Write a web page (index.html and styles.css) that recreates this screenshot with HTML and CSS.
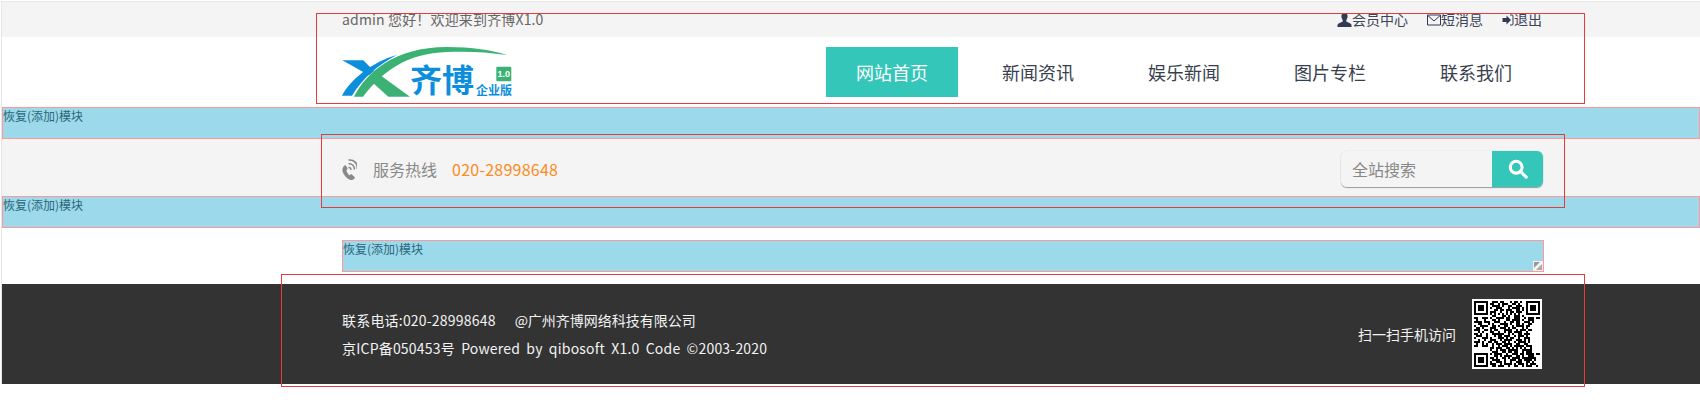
FILE: index.html
```html
<!DOCTYPE html>
<html lang="zh-CN">
<head>
<meta charset="utf-8">
<title>齐博X1.0</title>
<link rel="stylesheet" href="styles.css">
</head>
<body>
<div class="page">
  <div class="topbar">
    <div class="wrap topbar-in">
      <div class="welcome">admin 您好！欢迎来到齐博X1.0</div>
      <div class="user-links">
        <a class="ulink"><svg class="uicon" viewBox="0 0 15 14"><path d="M7.5 0C5.3 0 4.2 1.6 4.4 3.6c.1 1.3.6 2.5 1.3 3.3v1.5C3.800 9.300 1 10.200 .6 11.500L.4 14h14.200l-.2-2.500c-.4-1.300-3.200-2.200-5.100-3.100V6.900c.7-.8 1.200-2 1.300-3.300C10.800 1.600 9.700 0 7.500 0z"/></svg>会员中心</a>
        <a class="ulink"><svg class="uicon mail" viewBox="0 0 14 12"><path d="M.5 1h13v10H.5zM.8 1.500 7 7l6.200-5.500" fill="none" stroke="#333a56"/></svg>短消息</a>
        <a class="ulink"><svg class="uicon out" viewBox="0 0 11 12"><path d="M0 4h4V1.500L8.500 6 4 10.500V8H0z"/><path d="M7.500 1H9.500q1 0 1 1v8q0 1-1 1H7.500" fill="none" stroke="#333a56"/></svg>退出</a>
      </div>
    </div>
  </div>

  <header class="wrap header">
    <svg class="logo" viewBox="0 0 170 50" aria-label="齐博企业版">
      <path class="lb" d="M.3 13.300H21.300L32 24 27 28.300z"/>
      <path class="lb" d="M0 48.700C8 33 30 15 54.700 8 36 18 20 32 10 48.700z"/>
      <path class="lg" d="M12 49.700C24 26 52 0 105 0c25 0 45 3 60 8C145 5 125 4 105 5 65 6 40 25 21 49.700z"/>
      <path class="lg" d="M38 28 68 49.700H46.300L29.700 34.700z"/>
      <text class="lt-big" x="68" y="45">齐博</text>
      <text class="lt-small" x="134" y="48">企业版</text>
      <rect class="lg" x="154.300" y="19.700" width="15" height="14.500" rx="1"/>
      <text class="lt-ver" x="161.800" y="30">1.0</text>
    </svg>
    <nav class="nav">
      <a class="nav-item active">网站首页</a>
      <a class="nav-item">新闻资讯</a>
      <a class="nav-item">娱乐新闻</a>
      <a class="nav-item">图片专栏</a>
      <a class="nav-item">联系我们</a>
    </nav>
  </header>

  <div class="band">恢复(添加)模块</div>

  <div class="hotline">
    <div class="wrap hotline-in">
      <div class="hot-left">
        <svg class="phone" viewBox="0 0 15 22">
          <path d="M2.500 7.500C.8 9-.3 11.500 1 14.500c1.200 3 3.500 6 7 7.300 1.500.5 3.500.2 4.500-1.300.5-.8.200-1.400-.4-1.900l-2.300-2c-.6-.5-1.300-.4-1.800.1l-.7.7C6 16 4.800 14 4.300 12.300l.8-.7c.6-.5.6-1.200.2-1.900L3.900 7.700c-.4-.6-.9-.6-1.400-.2z" fill="#888"/>
          <path d="M6.500 9.500c1.500-.3 2.600 1 2.400 2.500M6.500 5.800c3.500-.6 6.300 2.300 5.700 5.800M6.500 2C12 1.200 16 5.500 15 11" fill="none" stroke="#888" stroke-width="1.500"/>
        </svg>
        <span class="hot-label">服务热线</span>
        <span class="hot-num">020-28998648</span>
      </div>
      <div class="search">
        <div class="search-input">全站搜索</div>
        <div class="search-btn">
          <svg class="search-icon" viewBox="0 0 22 22"><circle cx="9" cy="9" r="6.500" fill="none" stroke="#fff" stroke-width="3.400"/><path d="M13.500 13.500 20 20" stroke="#fff" stroke-width="3.400" stroke-linecap="round"/></svg>
        </div>
      </div>
    </div>
  </div>

  <div class="band">恢复(添加)模块</div>

  <div class="wrap content">
    <div class="band inner">恢复(添加)模块
      <svg class="resize" viewBox="0 0 10 10"><rect width="10" height="10" fill="#eef3f5"/><path d="M1 1h6L1 7z" fill="#999"/><path d="M9 9H3l6-6z" fill="#aaa"/><path d="M2 8 8 2" stroke="#fff"/></svg>
    </div>
  </div>

  <footer class="footer">
    <div class="wrap footer-in">
      <div class="foot-text">
        <div>联系电话:020-28998648<span class="foot-co">@广州齐博网络科技有限公司</span></div>
        <div class="foot-line2">京ICP备050453号 Powered by qibosoft X1.0 Code ©2003-2020</div>
      </div>
      <div class="foot-qr">
        <span>扫一扫手机访问</span>
        <svg class="qr" viewBox="-1 -1 35 35" shape-rendering="crispEdges">
          <rect x="-1" y="-1" width="35" height="35" fill="#fff"/>
          <g fill="none" stroke="#000">
            <rect x=".5" y=".5" width="6" height="6"/>
            <rect x="26.500" y=".5" width="6" height="6"/>
            <rect x=".5" y="26.500" width="6" height="6"/>
            <rect x="24.500" y="24.500" width="4" height="4"/>
            <path d="M9 .5h3m1 0h2m3 0h1m1 0h2m1 0h1
            M8 1.500h2m2 0h1m1 0h3m2 0h2m1 0h1
            M9 2.500h4m1 0h1m2 0h2m2 0h3
            M8 3.500h1m2 0h3m3 0h1m1 0h4m1 0h1
            M10 4.500h2m1 0h2m1 0h3m2 0h2m1 0h1
            M8 5.500h3m2 0h1m2 0h1m1 0h2m1 0h3
            M8 6.500h1m1 0h1m1 0h1m1 0h1m1 0h1m1 0h1m1 0h1m1 0h1
            M9 7.500h2m3 0h2m1 0h1m2 0h3m1 0h1
            M0 8.500h2m2 0h3m1 0h1m2 0h4m1 0h2m2 0h3m2 0h1m1 0h3m1 0h2
            M1 9.500h1m3 0h1m3 0h2m1 0h1m3 0h2m1 0h4m1 0h1m2 0h3
            M0 10.500h4m1 0h3m2 0h3m2 0h1m2 0h2m1 0h2m2 0h3m1 0h1
            M2 11.500h2m3 0h1m1 0h1m3 0h4m1 0h1m2 0h2m1 0h1m2 0h2
            M0 12.500h1m2 0h4m2 0h2m1 0h1m2 0h2m2 0h1m1 0h4m1 0h2
            M1 13.500h2m1 0h1m3 0h3m2 0h3m1 0h1m1 0h2m3 0h1m1 0h1
            M0 14.500h3m2 0h2m1 0h1m1 0h2m3 0h4m2 0h1m1 0h3m1 0h2
            M2 15.500h1m1 0h1m3 0h2m2 0h1m2 0h1m1 0h2m1 0h4m2 0h1
            M0 16.500h2m1 0h1m2 0h1m2 0h6m2 0h1m1 0h1m2 0h2m1 0h3
            M1 17.500h3m2 0h1m3 0h1m1 0h2m1 0h3m2 0h1m1 0h3m1 0h1
            M0 18.500h1m3 0h3m1 0h1m3 0h3m1 0h1m1 0h2m2 0h1m2 0h3
            M2 19.500h1m2 0h1m2 0h3m2 0h1m1 0h4m2 0h3m1 0h1m1 0h1
            M0 20.500h3m1 0h1m2 0h2m1 0h2m2 0h2m1 0h1m2 0h1m1 0h4m1 0h1
            M1 21.500h1m2 0h1m1 0h1m2 0h1m1 0h3m1 0h4m2 0h2m2 0h2
            M0 22.500h2m2 0h3m2 0h1m2 0h1m1 0h3m1 0h1m1 0h5m1 0h3
            M8 23.500h2m1 0h3m2 0h2m1 0h1m1 0h1m1 0h1m1 0h1m2 0h1
            M8 24.500h1m2 0h1m1 0h3m1 0h5
            M9 25.500h3m2 0h2m1 0h2m1 0h2m4 0h3
            M8 26.500h1m1 0h4m2 0h1m2 0h3m1 0h1m3 0h3m1 0h2
            M10 27.500h2m1 0h1m1 0h4m2 0h2m4 0h1m1 0h1
            M8 28.500h2m1 0h1m2 0h2m1 0h1m1 0h4m4 0h1m1 0h2
            M9 29.500h4m2 0h1m2 0h3m1 0h2m1 0h4m1 0h1
            M8 30.500h1m2 0h3m1 0h1m2 0h1m2 0h3m2 0h2m1 0h1
            M8 31.500h3m2 0h1m1 0h4m1 0h1m1 0h3m1 0h1m1 0h3
            M9 32.500h2m1 0h3m2 0h1m2 0h2m2 0h1m1 0h3m2 0h1"/>
          </g>
          <g>
            <rect x="2" y="2" width="3" height="3"/>
            <rect x="28" y="2" width="3" height="3"/>
            <rect x="2" y="28" width="3" height="3"/>
            <rect x="26" y="26" width="1" height="1"/>
          </g>
        </svg>
      </div>
    </div>
  </footer>
</div>

<div class="mark mark-1"></div>
<div class="mark mark-2"></div>
<div class="mark mark-3"></div>
</body>
</html>
```

FILE: styles.css
```css
* { box-sizing: border-box; }
html, body { margin: 0; padding: 0; background: #fff; }
body {
  font-family: "Noto Sans CJK SC", "Noto Sans", sans-serif;
  font-size: 14px;
  color: #333;
  height: 406px;
  overflow: hidden;
}
.page {
  margin: 1px 0 0 1px;
  border-left: 1px solid #e6e6e6;
  border-top: 1px solid #e6e6e6;
}
.wrap { width: 1200px; margin-left: 340px; }

/* top bar */
.topbar { background: #f4f4f4; height: 35px; }
.topbar-in { display: flex; justify-content: space-between; line-height: 35px; height: 35px; }
.welcome { color: #666; letter-spacing: .16px; }
.user-links { display: flex; gap: 19px; color: #3c4458; }
.ulink { display: flex; align-items: center; }
.uicon { width: 15px; height: 14px; fill: #333a56; }
.uicon.mail { width: 14px; height: 12px; }
.uicon.out { width: 12px; height: 12px; }

/* header */
.header { display: flex; justify-content: space-between; height: 70px; padding-top: 10px; }
.logo { width: 170px; height: 50px; display: block; overflow: visible; }
.lb { fill: #0d8edc; }
.lg { fill: #3bb273; }
.lt-big { font-size: 32px; font-weight: 700; fill: #0d8edc; }
.lt-small { font-size: 12px; font-weight: 700; fill: #0d8edc; }
.lt-ver { font-size: 9px; font-weight: 700; fill: #fff; text-anchor: middle; font-family: "Liberation Sans", sans-serif; }
.nav { display: flex; gap: 14px; }
.nav-item {
  width: 132px;
  height: 50px;
  line-height: 50px;
  text-align: center;
  font-size: 18px;
  color: #3a3f50;
}
.nav-item.active { background: #34c6b8; color: #fff; }

/* helper bands */
.band {
  position: relative;
  height: 32px;
  background: #9cd9eb;
  border: 1px solid #f99;
  font-size: 12px;
  line-height: 16px;
  color: #2a6679;
  white-space: nowrap;
}
.content { padding: 12px 0; width: 1202px; }
.resize { position: absolute; right: 0; bottom: 0; width: 10px; height: 10px; }

/* hotline */
.hotline { background: #f4f4f4; height: 57px; }
.hotline-in { display: flex; justify-content: space-between; padding-top: 12px; }
.hot-left { display: flex; align-items: center; height: 36px; font-size: 16px; }
.phone { width: 15px; height: 22px; margin-right: 16px; }
.hot-label { color: #888; margin-right: 15px; }
.hot-num { color: #fb8c1e; letter-spacing: .25px; }
.search {
  display: flex;
  width: 202px;
  height: 36px;
  margin-right: -1px;
  border-radius: 6px;
  overflow: hidden;
  box-shadow: 0 1px 1px #999, 0 0 1px #bbb;
}
.search-input {
  flex: 1;
  padding-left: 11px;
  font-size: 16px;
  line-height: 36px;
  color: #888;
  background: #f4f4f4;
}
.search-btn {
  width: 51px;
  background: #34c6b8;
  display: flex;
  align-items: center;
  justify-content: center;
}
.search-icon { width: 20px; height: 20px; }

/* footer */
.footer { background: #333; height: 100px; color: #f2f2f2; }
.footer-in { display: flex; justify-content: space-between; align-items: center; height: 100px; }
.foot-text { line-height: 28px; letter-spacing: .2px; }
.foot-co { margin-left: 19px; letter-spacing: 0; }
.foot-line2 { word-spacing: 2.9px; }
.foot-qr { display: flex; align-items: center; gap: 16px; }
.qr { width: 70px; height: 70px; display: block; }

/* red annotation frames */
.mark { position: absolute; border: 1px solid #e83a3a; pointer-events: none; }
.mark-1 { left: 316px; top: 13px; width: 1269px; height: 91px; }
.mark-2 { left: 321px; top: 134px; width: 1244px; height: 74px; }
.mark-3 { left: 281px; top: 274px; width: 1304px; height: 113px; }
```
